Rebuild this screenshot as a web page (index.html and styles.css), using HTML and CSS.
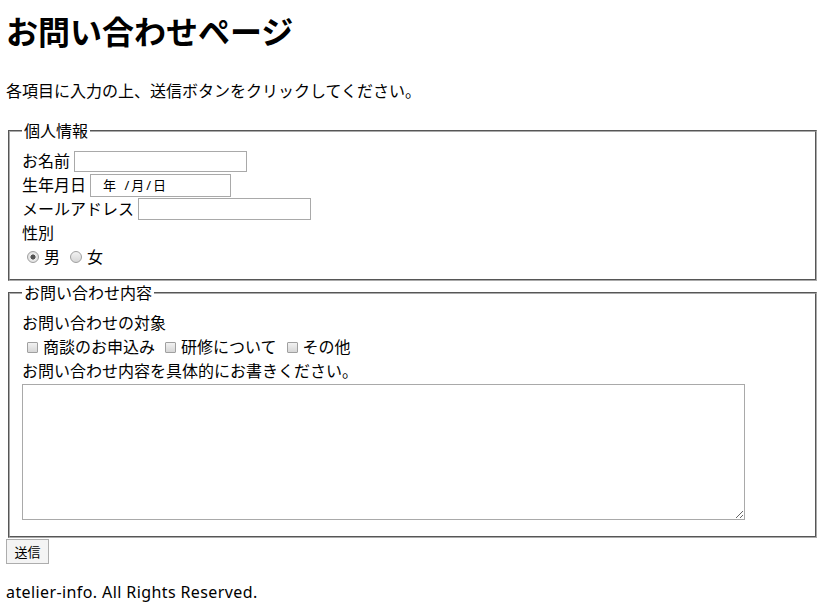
FILE: index.html
```html
<!DOCTYPE html>
<html lang="ja">
<head>
<meta charset="utf-8">
<title>お問い合わせページ</title>
<link rel="stylesheet" href="styles.css">
</head>
<body>
<h1 class="title">お問い合わせページ</h1>
<p class="lead">各項目に入力の上、送信ボタンをクリックしてください。</p>
<form class="form">
  <fieldset class="group">
    <legend class="legend">個人情報</legend>
    <div class="row"><label class="label">お名前</label> <input class="text name" type="text"></div>
    <div class="row"><label class="label">生年月日</label> <span class="date">年 /月/日</span></div>
    <div class="row"><label class="label">メールアドレス</label> <input class="text email" type="email"></div>
    <div class="row">性別</div>
    <div class="row options">
      <label class="opt"><input class="radio" type="radio" name="sex" checked>男</label>
      <label class="opt"><input class="radio" type="radio" name="sex">女</label>
    </div>
  </fieldset>
  <fieldset class="group">
    <legend class="legend">お問い合わせ内容</legend>
    <div class="row">お問い合わせの対象</div>
    <div class="row options">
      <label class="opt"><input class="check" type="checkbox">商談のお申込み</label>
      <label class="opt"><input class="check" type="checkbox">研修について</label>
      <label class="opt"><input class="check" type="checkbox">その他</label>
    </div>
    <div class="row">お問い合わせ内容を具体的にお書きください。</div>
    <textarea class="message"></textarea>
  </fieldset>
  <button class="submit" type="button">送信</button>
</form>
<p class="footer">atelier-info. All Rights Reserved.</p>
</body>
</html>
```
FILE: styles.css
```css
html, body {
  background: #fff;
}
body {
  margin: 0;
  padding: 8px 6px;
  font-family: "Noto Sans", "Noto Sans CJK JP", sans-serif;
  font-size: 16px;
  line-height: 24px;
  color: #000;
}
.title {
  margin: 0;
  font-size: 32px;
  line-height: 48px;
  font-weight: bold;
}
.lead {
  margin: 23px 0 0;
}
.form {
  margin: 16px 0 0;
}
.group {
  margin: 0 2px;
  padding: 6px 12px 10px;
  border: 2px groove #aaa;
}
.legend {
  padding: 0 2px;
}
.row {
  height: 24px;
  display: flex;
  align-items: center;
}
.label {
  margin-right: 4px;
}
.text, .date {
  box-sizing: border-box;
  border: 1px solid #a9a9a9;
  font: inherit;
  font-size: 13px;
  padding: 0 4px;
  background: #fff;
}
.name {
  width: 173px;
  height: 21px;
}
.email {
  width: 173px;
  height: 22px;
}
.date {
  display: inline-flex;
  align-items: center;
  width: 141px;
  height: 23px;
  padding-left: 12px;
  font-size: 13px;
  letter-spacing: 2px;
  word-spacing: 1px;
}
.options {
  padding-left: 5px;
  gap: 10px;
}
.opt {
  display: inline-flex;
  align-items: center;
}
.radio, .check {
  appearance: none;
  -webkit-appearance: none;
  margin: 0 5px 0 0;
  box-sizing: border-box;
  border: 1px solid #a0a0a0;
  background: linear-gradient(#f2f2f2, #d6d6d6);
}
.radio {
  width: 12px;
  height: 12px;
  border-radius: 50%;
}
.radio:checked {
  background: radial-gradient(circle, #555 0 2.3px, #ececec 2.8px, #d8d8d8 100%);
}
.check {
  width: 11px;
  height: 11px;
  border-radius: 1px;
}
.message {
  display: block;
  box-sizing: border-box;
  width: 723px;
  height: 136px;
  margin: 1px 0 6px;
  border: 1px solid #a9a9a9;
  resize: both;
}
.submit {
  display: block;
  margin: 1px 0 0;
  width: 43px;
  height: 25px;
  padding: 0;
  border: 1px solid #adadad;
  background: #f4f4f4;
  font-family: "Noto Sans CJK JP", sans-serif;
  font-size: 13px;
  line-height: 23px;
  color: #000;
}
.footer {
  margin: 16px 0 0;
  letter-spacing: 0.4px;
}
```
